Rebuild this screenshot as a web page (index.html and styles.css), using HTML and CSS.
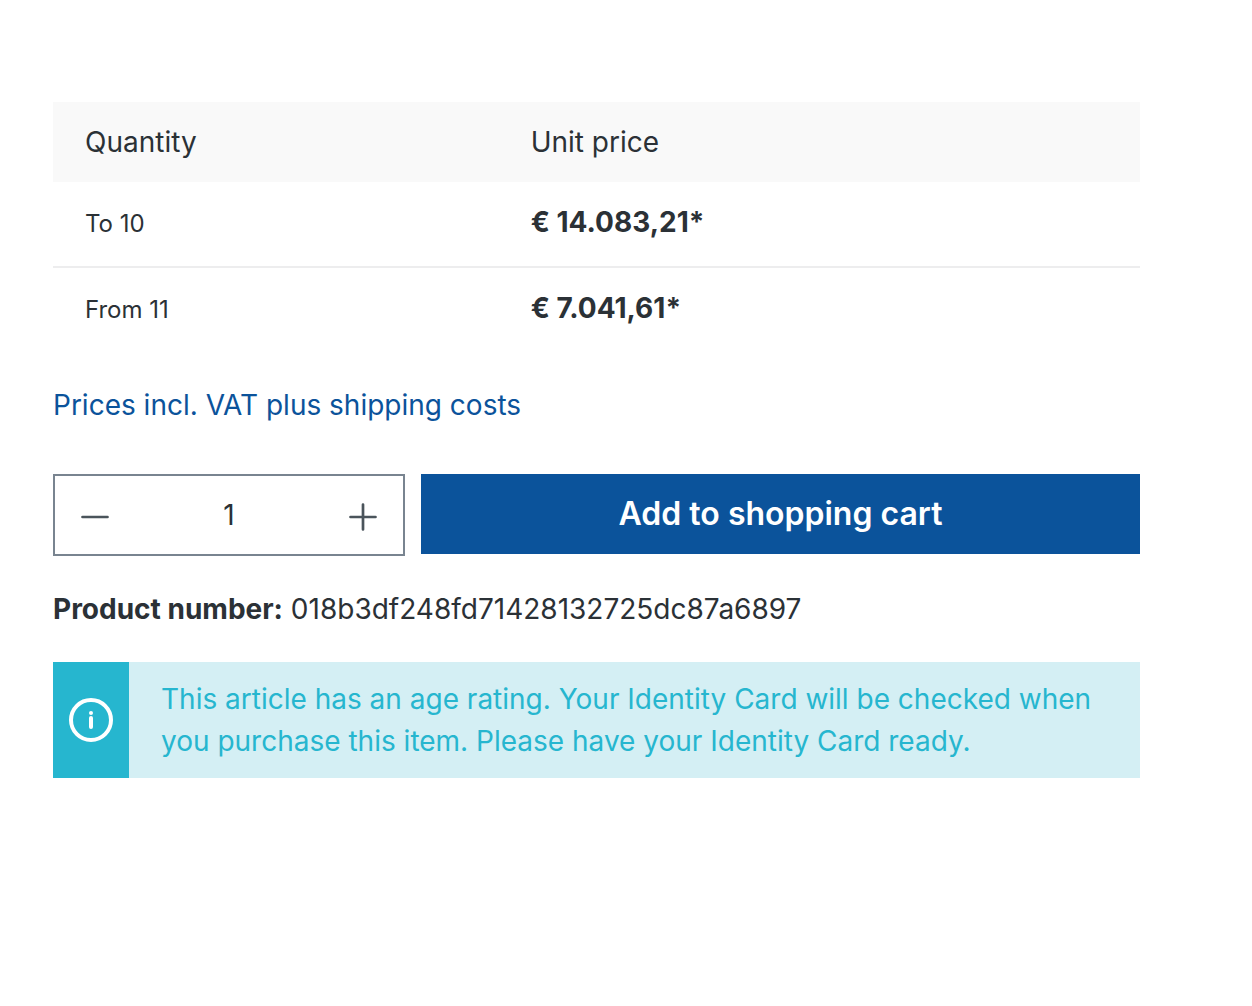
FILE: index.html
```html
<!DOCTYPE html>
<html lang="en">
<head>
    <meta charset="utf-8">
    <meta name="viewport" content="width=device-width, initial-scale=1">
    <title>Product</title>
    <link rel="stylesheet" href="styles.css">
</head>
<body>
    <main class="buy-box">
        <table class="prices">
            <thead>
                <tr>
                    <th scope="col">Quantity</th>
                    <th scope="col">Unit price</th>
                </tr>
            </thead>
            <tbody>
                <tr>
                    <th scope="row">To 10</th>
                    <td>€ 14.083,21*</td>
                </tr>
                <tr>
                    <th scope="row">From 11</th>
                    <td>€ 7.041,61*</td>
                </tr>
            </tbody>
        </table>

        <p class="tax"><a href="#shipping">Prices incl. VAT plus shipping costs</a></p>

        <form class="buy-form">
            <div class="quantity">
                <button type="button" class="step" id="minus" aria-label="Decrease quantity">
                    <svg viewBox="0 0 28 28" width="28" height="28"><path d="M1.5 14h25"/></svg>
                </button>
                <input type="text" inputmode="numeric" id="quantity" value="1" aria-label="Quantity">
                <button type="button" class="step" id="plus" aria-label="Increase quantity">
                    <svg viewBox="0 0 28 28" width="28" height="28"><path d="M1.5 14h25M14 1.5v25"/></svg>
                </button>
            </div>
            <button type="submit" class="buy-button">Add to shopping cart</button>
        </form>

        <p class="product-number"><strong>Product number:</strong> 018b3df248fd71428132725dc87a6897</p>

        <div class="alert">
            <div class="alert-icon">
                <svg viewBox="0 0 44 44" width="44" height="44">
                    <circle cx="22" cy="22" r="20"/>
                    <path d="M22 20v9"/>
                    <circle class="dot" cx="22" cy="15" r="2"/>
                </svg>
            </div>
            <p class="alert-text">This article has an age rating. Your Identity Card will be checked when you purchase this item. Please have your Identity Card ready.</p>
        </div>
    </main>

    <script>
        const quantity = document.getElementById("quantity");

        function changeQuantity(step) {
            const value = parseInt(quantity.value, 10) || 1;
            quantity.value = Math.max(1, value + step);
        }
        document.getElementById("minus").addEventListener("click", () => changeQuantity(-1));
        document.getElementById("plus").addEventListener("click", () => changeQuantity(1));
    </script>
</body>
</html>
```
FILE: styles.css
```css
* {
    box-sizing: border-box;
}
body {
    margin: 0;
    background-color: #fff;
    color: #2b3136;
    font-family: Inter, sans-serif;
    font-size: 28px;
    line-height: 42px;
}
p {
    margin: 0;
}
.buy-box {
    padding: 102px 112px 102px 53px;
}
.prices {
    width: 100%;
    table-layout: fixed;
    border-collapse: separate;
    border-spacing: 0;
    margin-bottom: 30px;
}
.prices th,
.prices td {
    padding: 19px 32px;
    text-align: left;
    vertical-align: baseline;
    font-weight: 400;
}
.prices th:first-child {
    width: 41%;
}
.prices thead {
    background-color: #f9f9f9;
}
.prices tbody th,
.prices tbody td {
    height: 86px;
}
.prices tbody tr:not(:last-child) > * {
    border-bottom: 2px solid #ededee;
}
.prices tbody th {
    font-size: 24px;
}
.prices tbody td {
    font-weight: 700;
}
.tax {
    margin-bottom: 48px;
}
.tax a {
    color: #0b539b;
    text-decoration: none;
}
.buy-form {
    display: flex;
    align-items: flex-start;
    gap: 16px;
    margin-bottom: 32px;
}
.quantity {
    flex: 0 0 352px;
    min-width: 0;
    display: flex;
    height: 82px;
    border: 2px solid #798490;
}
.quantity input {
    flex: 1;
    width: 100%;
    min-width: 0;
    padding: 0;
    border: none;
    background: none;
    color: inherit;
    font: inherit;
    text-align: center;
}
.step {
    flex: none;
    display: flex;
    align-items: center;
    padding: 3px 26px 0;
    border: none;
    background: none;
    cursor: pointer;
}
.step svg {
    fill: none;
    stroke: #4a545b;
    stroke-width: 2.7;
    stroke-linecap: round;
}
.buy-button {
    flex: 1;
    height: 80px;
    padding: 0 16px 2px;
    border: none;
    background-color: #0b539b;
    color: #fff;
    font-family: inherit;
    font-size: 32px;
    font-weight: 600;
    cursor: pointer;
}
.product-number {
    margin-bottom: 32px;
}
.product-number strong {
    font-weight: 700;
}
.alert {
    display: flex;
    background-color: #d4eff4;
    color: #26b6cf;
}
.alert-icon {
    flex: 0 0 76px;
    display: flex;
    align-items: center;
    justify-content: center;
    background-color: #26b6cf;
}
.alert-icon svg {
    fill: none;
    stroke: #fff;
    stroke-width: 4;
    stroke-linecap: round;
}
.alert-icon .dot {
    fill: #fff;
    stroke: none;
}
.alert-text {
    padding: 16px 32px;
}
```
